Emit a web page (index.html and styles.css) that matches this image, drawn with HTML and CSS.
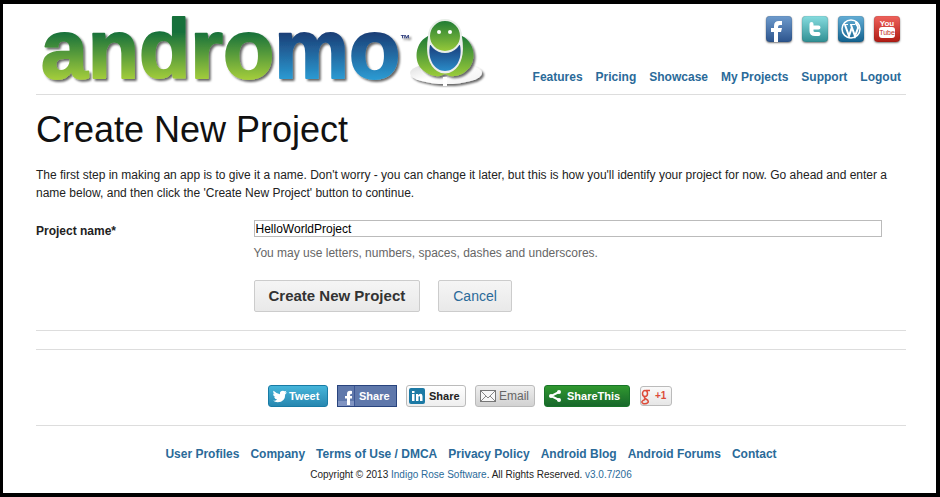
FILE: index.html
```html
<!DOCTYPE html>
<html lang="en">
<head>
<meta charset="utf-8">
<title>Create New Project</title>
<link rel="stylesheet" href="styles.css">
</head>
<body>
<header class="site-header">
  <a class="logo" href="#" aria-label="andromo">
    <svg width="450" height="82" viewBox="36 12 450 82">
      <defs>
        <linearGradient id="green" gradientUnits="userSpaceOnUse" x1="0" y1="32" x2="0" y2="79">
          <stop offset="0" stop-color="#16703a"/><stop offset="1" stop-color="#a2cc3a"/>
        </linearGradient>
        <linearGradient id="blue" gradientUnits="userSpaceOnUse" x1="0" y1="33" x2="0" y2="79">
          <stop offset="0" stop-color="#1b3f77"/><stop offset="1" stop-color="#2b9ad2"/>
        </linearGradient>
        <linearGradient id="head" x1="0" y1="0" x2="0" y2="1">
          <stop offset="0" stop-color="#1d7a35"/><stop offset="1" stop-color="#9acb3a"/>
        </linearGradient>
        <linearGradient id="belly" x1="0" y1="0" x2="0" y2="1">
          <stop offset="0.2" stop-color="#1c4c8a"/><stop offset="1" stop-color="#2a8cc8"/>
        </linearGradient>
        <linearGradient id="plate" x1="0" y1="0" x2="1" y2="1">
          <stop offset="0" stop-color="#d8d8d8"/><stop offset="0.5" stop-color="#ffffff"/><stop offset="1" stop-color="#f0f0f0"/>
        </linearGradient>
        <filter id="shadow" x="-10%" y="-10%" width="125%" height="130%">
          <feDropShadow dx="2" dy="2" stdDeviation="1.2" flood-color="#000" flood-opacity="0.6"/>
        </filter>
      </defs>
      <g filter="url(#shadow)">
        <text class="wordmark" x="41" y="78"><tspan class="andro">andro</tspan><tspan class="mo">mo</tspan></text>
        <text class="trademark" x="400" y="42">™</text>
      </g>
      <ellipse cx="446" cy="73" rx="36" ry="11" fill="url(#plate)" filter="url(#shadow)"/>
      <path d="M420 68Q423 79 444 80Q467 79 470 68" fill="#fff"/>
      <path d="M428 36C414 43 413 64 424 71Q431 77 440 76L445 74L450 76Q460 77 466 71C477 63 476 43 462 36Z" fill="url(#head)" filter="url(#shadow)"/>
      <path d="M428 37Q424 62 437 71Q445 76 453 71Q466 62 462 37Z" fill="#eee"/>
      <path d="M430 45C427 60 435 71 445 71S463 60 460 45Z" fill="url(#belly)"/>
      <path d="M445 77V86" stroke="#fff" stroke-width="4"/>
      <circle cx="445" cy="36" r="16" fill="url(#head)" stroke="#e8eee8" stroke-width="2"/>
      <circle cx="439" cy="32" r="2" fill="#fff"/><circle cx="450" cy="32" r="2" fill="#fff"/>
    </svg>
  </a>
  <div class="header-side">
    <div class="social">
      <a class="facebook" href="#" aria-label="Facebook"><svg viewBox="0 0 26 26"><path d="M5 12H8V10Q8 5 13 5H16V9H14Q12 9 12 11V12H16L15 16H12V26H8V16H5Z" fill="#fff"/></svg></a>
      <a class="twitter" href="#" aria-label="Twitter"><svg viewBox="0 0 26 26"><path d="M9.500 8V15Q9.500 18 13 18H16.500M10 11.500H16.500" fill="none" stroke="#fff" stroke-width="4" stroke-linecap="round" stroke-linejoin="round"/></svg></a>
      <a class="wordpress" href="#" aria-label="WordPress"><svg viewBox="0 0 26 26"><circle cx="13" cy="13" r="9" fill="none" stroke="#fff" stroke-width="1.500"/><path d="M5 8.500H10M12 8.500H17" stroke="#fff" stroke-width="1.200"/><path d="M7 9L11 20L14 11M13 9L17 20L20 12Q20 10 19 9Q17 7 19 6" fill="none" stroke="#fff" stroke-width="2"/></svg></a>
      <a class="youtube" href="#" aria-label="YouTube"><svg viewBox="0 0 26 26"><rect x="5" y="11" width="16" height="11" rx="3" fill="#fff"/><text class="you" x="13" y="10" text-anchor="middle">You</text><text class="tube" x="13" y="19" text-anchor="middle">Tube</text></svg></a>
    </div>
    <nav class="links">
      <a href="#">Features</a><a href="#">Pricing</a><a href="#">Showcase</a><a href="#">My Projects</a><a href="#">Support</a><a href="#">Logout</a>
    </nav>
  </div>
</header>
<main>
  <h1>Create New Project</h1>
  <p class="intro">The first step in making an app is to give it a name. Don't worry - you can change it later, but this is how you'll identify your project for now. Go ahead and enter a name below, and then click the 'Create New Project' button to continue.</p>
  <form class="project-form">
    <label for="name">Project name*</label>
    <div class="field">
      <input id="name" type="text" value="HelloWorldProject">
      <p class="hint">You may use letters, numbers, spaces, dashes and underscores.</p>
      <div class="actions">
        <button class="button primary" type="button">Create New Project</button>
        <a class="button" href="#">Cancel</a>
      </div>
    </div>
  </form>
</main>
<section class="share">
  <button class="chip tweet" type="button"><svg width="14" height="13" viewBox="0 0 24 20"><path d="M24 3L21 6Q21 19 8 20Q3 20 0 17Q4 18 7 15Q3 15 2 11H4Q0 9 0 5L3 6Q-1 3 1 0Q6 5 12 6Q11 0 17 0Q19 0 20 1L23 0L21 3Z" fill="#fff"/></svg>Tweet</button>
  <button class="chip fb" type="button"><svg width="17" height="20" viewBox="0 0 17 20"><path d="M0 15H16V20H0Z" fill="#8094c2"/><path d="M16.500 0V20" stroke="#3c5694"/><path d="M7 10H9V8Q9 4 14 5V8Q12 7 12 10H14V12.500H12V19H9V12.500H7Z" fill="#fff"/></svg>Share</button>
  <button class="chip linkedin" type="button"><svg width="16" height="16" viewBox="0 0 16 16"><rect width="16" height="16" rx="2" fill="#1c7aa5"/><path d="M3 6H5.500V13H3ZM3 3H5.500V5H3ZM7 6H9V7Q13 4 13.500 8V13H11V9Q10 7 9.500 9V13H7Z" fill="#fff"/></svg>Share</button>
  <button class="chip email" type="button"><svg width="16" height="12" viewBox="0 0 16 12"><rect x=".5" y=".5" width="15" height="11" fill="#f8f8f8" stroke="#777"/><path d="M1 1L8 8L15 1M1 11L6 6M15 11L10 6" fill="none" stroke="#888"/></svg>Email</button>
  <button class="chip sharethis" type="button"><svg width="12" height="12" viewBox="0 0 12 12"><path d="M10 2L2 6L10 10" fill="none" stroke="#fff" stroke-width="2"/><circle cx="10" cy="2" r="2" fill="#fff"/><circle cx="2" cy="6" r="2" fill="#fff"/><circle cx="10" cy="10" r="2" fill="#fff"/></svg>ShareThis</button>
  <button class="chip plusone" type="button"><svg width="10" height="18" viewBox="0 0 10 18"><ellipse cx="4" cy="6.500" rx="2.500" ry="3" fill="none" stroke="#dd4b39" stroke-width="1.500"/><path d="M5 3.500H9M4 9.500Q2.500 11 5 12Q8 13.500 7 15.500Q5 17.500 2 16.500Q-1 14.500 4 12.500" fill="none" stroke="#dd4b39" stroke-width="1.500"/></svg>+1</button>
</section>
<footer>
  <nav class="links">
    <a href="#">User Profiles</a><a href="#">Company</a><a href="#">Terms of Use / DMCA</a><a href="#">Privacy Policy</a><a href="#">Android Blog</a><a href="#">Android Forums</a><a href="#">Contact</a>
  </nav>
  <p class="copyright">Copyright © 2013 <a href="#">Indigo Rose Software</a>. All Rights Reserved. <a href="#">v3.0.7/206</a></p>
</footer>
</body>
</html>
```
FILE: styles.css
```css
* { box-sizing: border-box; }
body {
  margin: 0;
  min-height: 100vh;
  padding: 8px 30px 0 33px;
  border: 4px solid #000;
  border-left-width: 3px;
  background: #fff;
  color: #222;
  font: 12px/18px "Liberation Sans", Arial, sans-serif;
}
a { color: #2a6a99; text-decoration: none; }
h1, p { margin: 0; }

.site-header {
  display: flex;
  justify-content: space-between;
  height: 83px;
  border-bottom: 1px solid #ddd;
}
.logo svg { display: block; overflow: visible; }
.wordmark { font-size: 84px; font-weight: bold; stroke-width: 2px; stroke-linejoin: round; }
.andro { fill: url(#green); stroke: url(#green); }
.mo { fill: url(#blue); stroke: url(#blue); }
.trademark { font-size: 10px; font-weight: bold; fill: #26377a; }

.header-side {
  display: flex;
  flex-direction: column;
  justify-content: space-between;
  align-items: flex-end;
  padding: 4px 5px 8px 0;
}
.social { display: flex; gap: 10px; padding-right: 1px; }
.social a {
  width: 26px;
  height: 26px;
  border-radius: 4px;
  overflow: hidden;
  box-shadow: 0 1px 2px #0008, inset 0 0 1px #0008;
}
.social svg { display: block; }
.facebook { background: linear-gradient(#6e9bcd, #2c548d); }
.twitter { background: linear-gradient(#86dcdf, #308f93); }
.wordpress { background: linear-gradient(#64aed6, #12628f); }
.youtube { background: linear-gradient(#ef625b, #b01b14); }
.you { font: bold 8px "Liberation Sans Narrow", "Liberation Sans", sans-serif; fill: #fff; }
.tube { font: 7px "Liberation Sans Narrow", "Liberation Sans", sans-serif; fill: #c22b24; }

.links { display: flex; gap: 13px; font-weight: bold; }

h1 { margin-top: 13px; font-size: 36px; line-height: 44px; font-weight: normal; color: #111; }
.intro { margin-top: 14px; }

.project-form {
  display: grid;
  grid-template-columns: 25% 1fr;
  margin-top: 18px;
  padding-bottom: 18px;
  border-bottom: 1px solid #ddd;
}
.project-form label { padding-top: 2px; font-weight: bold; }
.field { padding-right: 24px; }
.field input {
  display: block;
  width: 100%;
  height: 17px;
  padding: 0 1px;
  border: 1px solid #bbb;
  color: #000;
  font: inherit;
}
.hint { margin-top: 7px; color: #666; }
.actions { display: flex; gap: 18px; margin-top: 18px; }
.button {
  height: 32px;
  padding: 0 14px;
  border: 1px solid #ccc;
  border-radius: 2px;
  background: linear-gradient(#f5f5f5, #e9e9e9);
  font: 14px/30px "Liberation Sans", Arial, sans-serif;
}
.primary { color: #333; font-size: 15px; font-weight: bold; }

.share {
  display: flex;
  justify-content: center;
  align-items: center;
  gap: 9px;
  margin-top: 18px;
  padding: 35px 2px 18px 0;
  border-top: 1px solid #ddd;
  border-bottom: 1px solid #ddd;
}
.chip {
  display: flex;
  align-items: center;
  gap: 3px;
  width: 60px;
  height: 22px;
  padding: 0 4px;
  border: 1px solid;
  border-radius: 3px;
  font: bold 11px/20px "Liberation Sans", Arial, sans-serif;
  white-space: nowrap;
}
.chip svg { flex: none; }
.tweet { gap: 2px; border-color: #187ba5; background: linear-gradient(#45b5da, #2787b0); color: #fff; }
.fb { gap: 4px; padding: 0; border-color: #29447e; border-radius: 0; background: #5f78ab; color: #fff; }
.linkedin { padding: 0 2px; gap: 4px; border-color: #bbb; background: linear-gradient(#fff, #eee); color: #222; }
.email { border-color: #bbb; background: linear-gradient(#eee, #d2d2d2); color: #666; font-weight: normal; font-size: 12px; }
.sharethis { width: 86px; gap: 6px; border-color: #187428; background: linear-gradient(#30982f, #17682b); color: #fff; }
.plusone { width: 32px; height: 20px; margin-left: 1px; padding: 0; gap: 4px; border-color: #bbb; background: linear-gradient(#fafafa, #e6e6e6); color: #dd4b39; font-size: 10px; }

footer { padding-top: 18px; text-align: center; }
footer .links { justify-content: center; gap: 11px; line-height: 20px; }
.copyright { margin-top: 3px; font-size: 10px; line-height: 16px; }
```
